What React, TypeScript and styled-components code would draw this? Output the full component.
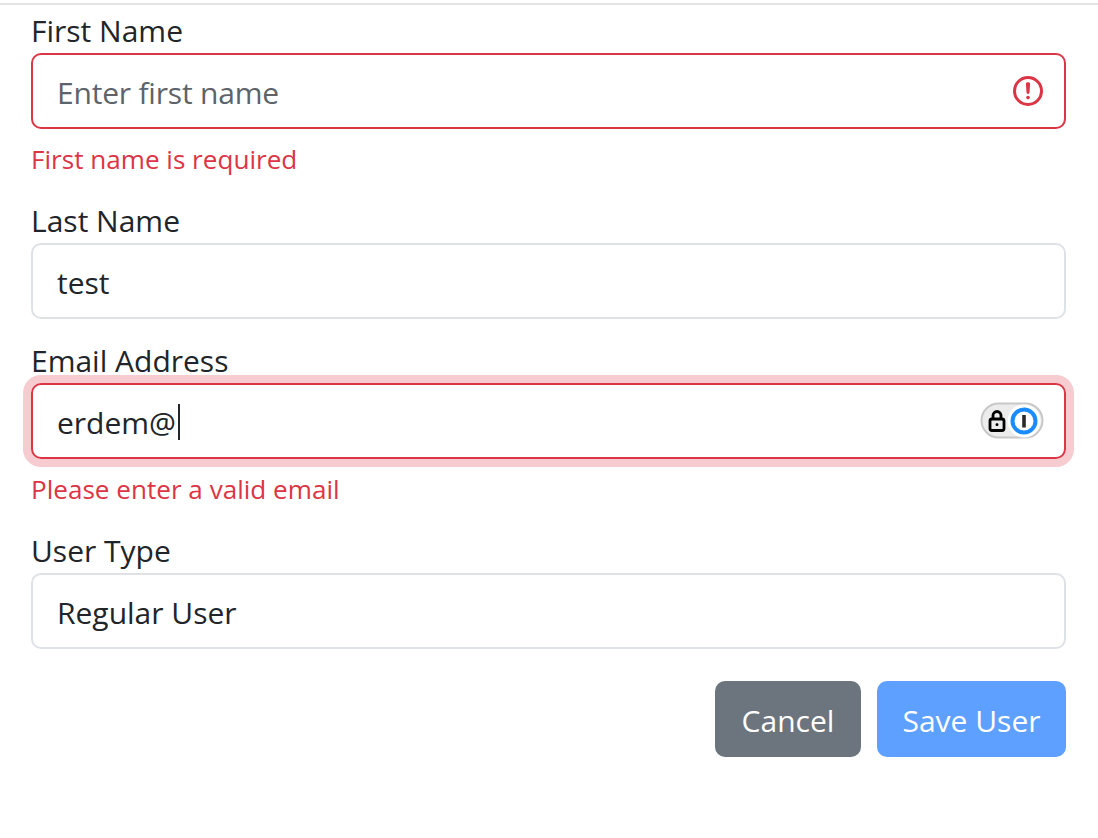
import React from "react";
import styled, { createGlobalStyle } from "styled-components";

const Global = createGlobalStyle`
  html, body { margin: 0; padding: 0; background: #fff; }
  body { font-family: "Open Sans", "Noto Sans", sans-serif; color: #212529; }
  * { box-sizing: border-box; }
`;

const Page = styled.div`
  width: 1098px;
  height: 838px;
  overflow: hidden;
  padding-top: 3px;
`;

const Divider = styled.hr`
  margin: 0;
  height: 2px;
  border: none;
  background: #e2e3e4;
`;

const Form = styled.form`
  padding: 6px 32px 0 31px;
  display: flex;
  flex-direction: column;
`;

const Group = styled.div<{ $gap: number }>`
  margin-bottom: ${(p) => p.$gap}px;
`;

const Label = styled.label`
  display: block;
  font-size: 30px;
  line-height: 40px;
  height: 40px;
  margin-bottom: 2px;
`;

const FieldWrap = styled.div`
  position: relative;
`;

const Input = styled.div<{ $invalid?: boolean; $focus?: boolean; $placeholder?: boolean }>`
  height: 76px;
  border-radius: 10px;
  border: 2px solid ${(p) => (p.$invalid ? "#dc3545" : "#dee2e6")};
  box-shadow: ${(p) => (p.$focus ? "0 0 0 8px rgba(220,53,69,.25)" : "none")};
  padding: 2px 24px 0;
  display: flex;
  align-items: center;
  font-size: 30px;
  letter-spacing: ${(p) => (p.$placeholder ? "-0.2px" : "0")};
  color: ${(p) => (p.$placeholder ? "#5c636a" : "#212529")};
`;

const Caret = styled.span`
  display: inline-block;
  width: 2px;
  height: 36px;
  background: #212529;
  margin-left: 2px;
`;

const Feedback = styled.div`
  color: #dc3545;
  font-size: 26.1px;
  line-height: 38px;
  margin-top: 11px;
`;

const AlertIcon = styled.svg`
  position: absolute;
  right: 20px;
  top: 20px;
  width: 36px;
  height: 36px;
`;

const PmIcon = styled.svg`
  position: absolute;
  right: 21px;
  top: 19px;
  width: 66px;
  height: 37px;
`;

const Actions = styled.div`
  display: flex;
  justify-content: flex-end;
  gap: 16px;
`;

const Button = styled.button<{ $kind: "secondary" | "primary"; $width: number }>`
  width: ${(p) => p.$width}px;
  height: 76px;
  border: none;
  border-radius: 10px;
  padding: 2px 0 0;
  font: inherit;
  font-size: 30px;
  color: #fff;
  background: ${(p) => (p.$kind === "secondary" ? "#6c757d" : "#5ea0ff")};
`;

export default function App() {
  return (
    <>
      <Global />
      <Page>
        <Divider />
        <Form>
          <Group $gap={23}>
            <Label>First Name</Label>
            <FieldWrap>
              <Input $invalid $placeholder>Enter first name</Input>
              <AlertIcon viewBox="0 0 12 12" fill="none" stroke="#dc3545">
                <circle cx="6" cy="6" r="4.5" />
                <path strokeLinejoin="round" d="M5.8 3.6h.4L6 6.5z" />
                <circle cx="6" cy="8.2" r=".6" fill="#dc3545" stroke="none" />
              </AlertIcon>
            </FieldWrap>
            <Feedback>First name is required</Feedback>
          </Group>
          <Group $gap={22}>
            <Label>Last Name</Label>
            <Input>test</Input>
          </Group>
          <Group $gap={23}>
            <Label>Email Address</Label>
            <FieldWrap>
              <Input $invalid $focus>erdem@<Caret /></Input>
              <PmIcon viewBox="0 0 66 37" fill="none">
                <circle cx="49" cy="19" r="15" fill="#e0556a" />
                <rect x="2.5" y="1.5" width="61" height="34" rx="17" fill="#ececec" stroke="#c8c8c8" strokeWidth="2" />
                <circle cx="45" cy="19" r="16.5" fill="#fff" />
                <circle cx="45" cy="19" r="11.5" fill="#fff" stroke="#1a8cff" strokeWidth="4" />
                <rect x="43.2" y="13" width="3.6" height="12.5" fill="#2a2a2a" />
                <rect x="11" y="17" width="14" height="11.5" rx="2" stroke="#000" strokeWidth="2.8" />
                <path d="M14 17v-3.5a4 4 0 0 1 8 0V17" stroke="#000" strokeWidth="2.8" />
                <rect x="16.6" y="21.2" width="2.8" height="2.8" rx="1" fill="#000" />
              </PmIcon>
            </FieldWrap>
            <Feedback>Please enter a valid email</Feedback>
          </Group>
          <Group $gap={32}>
            <Label>User Type</Label>
            <Input>Regular User</Input>
          </Group>
          <Actions>
            <Button type="button" $kind="secondary" $width={146}>Cancel</Button>
            <Button type="button" $kind="primary" $width={189}>Save User</Button>
          </Actions>
        </Form>
      </Page>
    </>
  );
}
